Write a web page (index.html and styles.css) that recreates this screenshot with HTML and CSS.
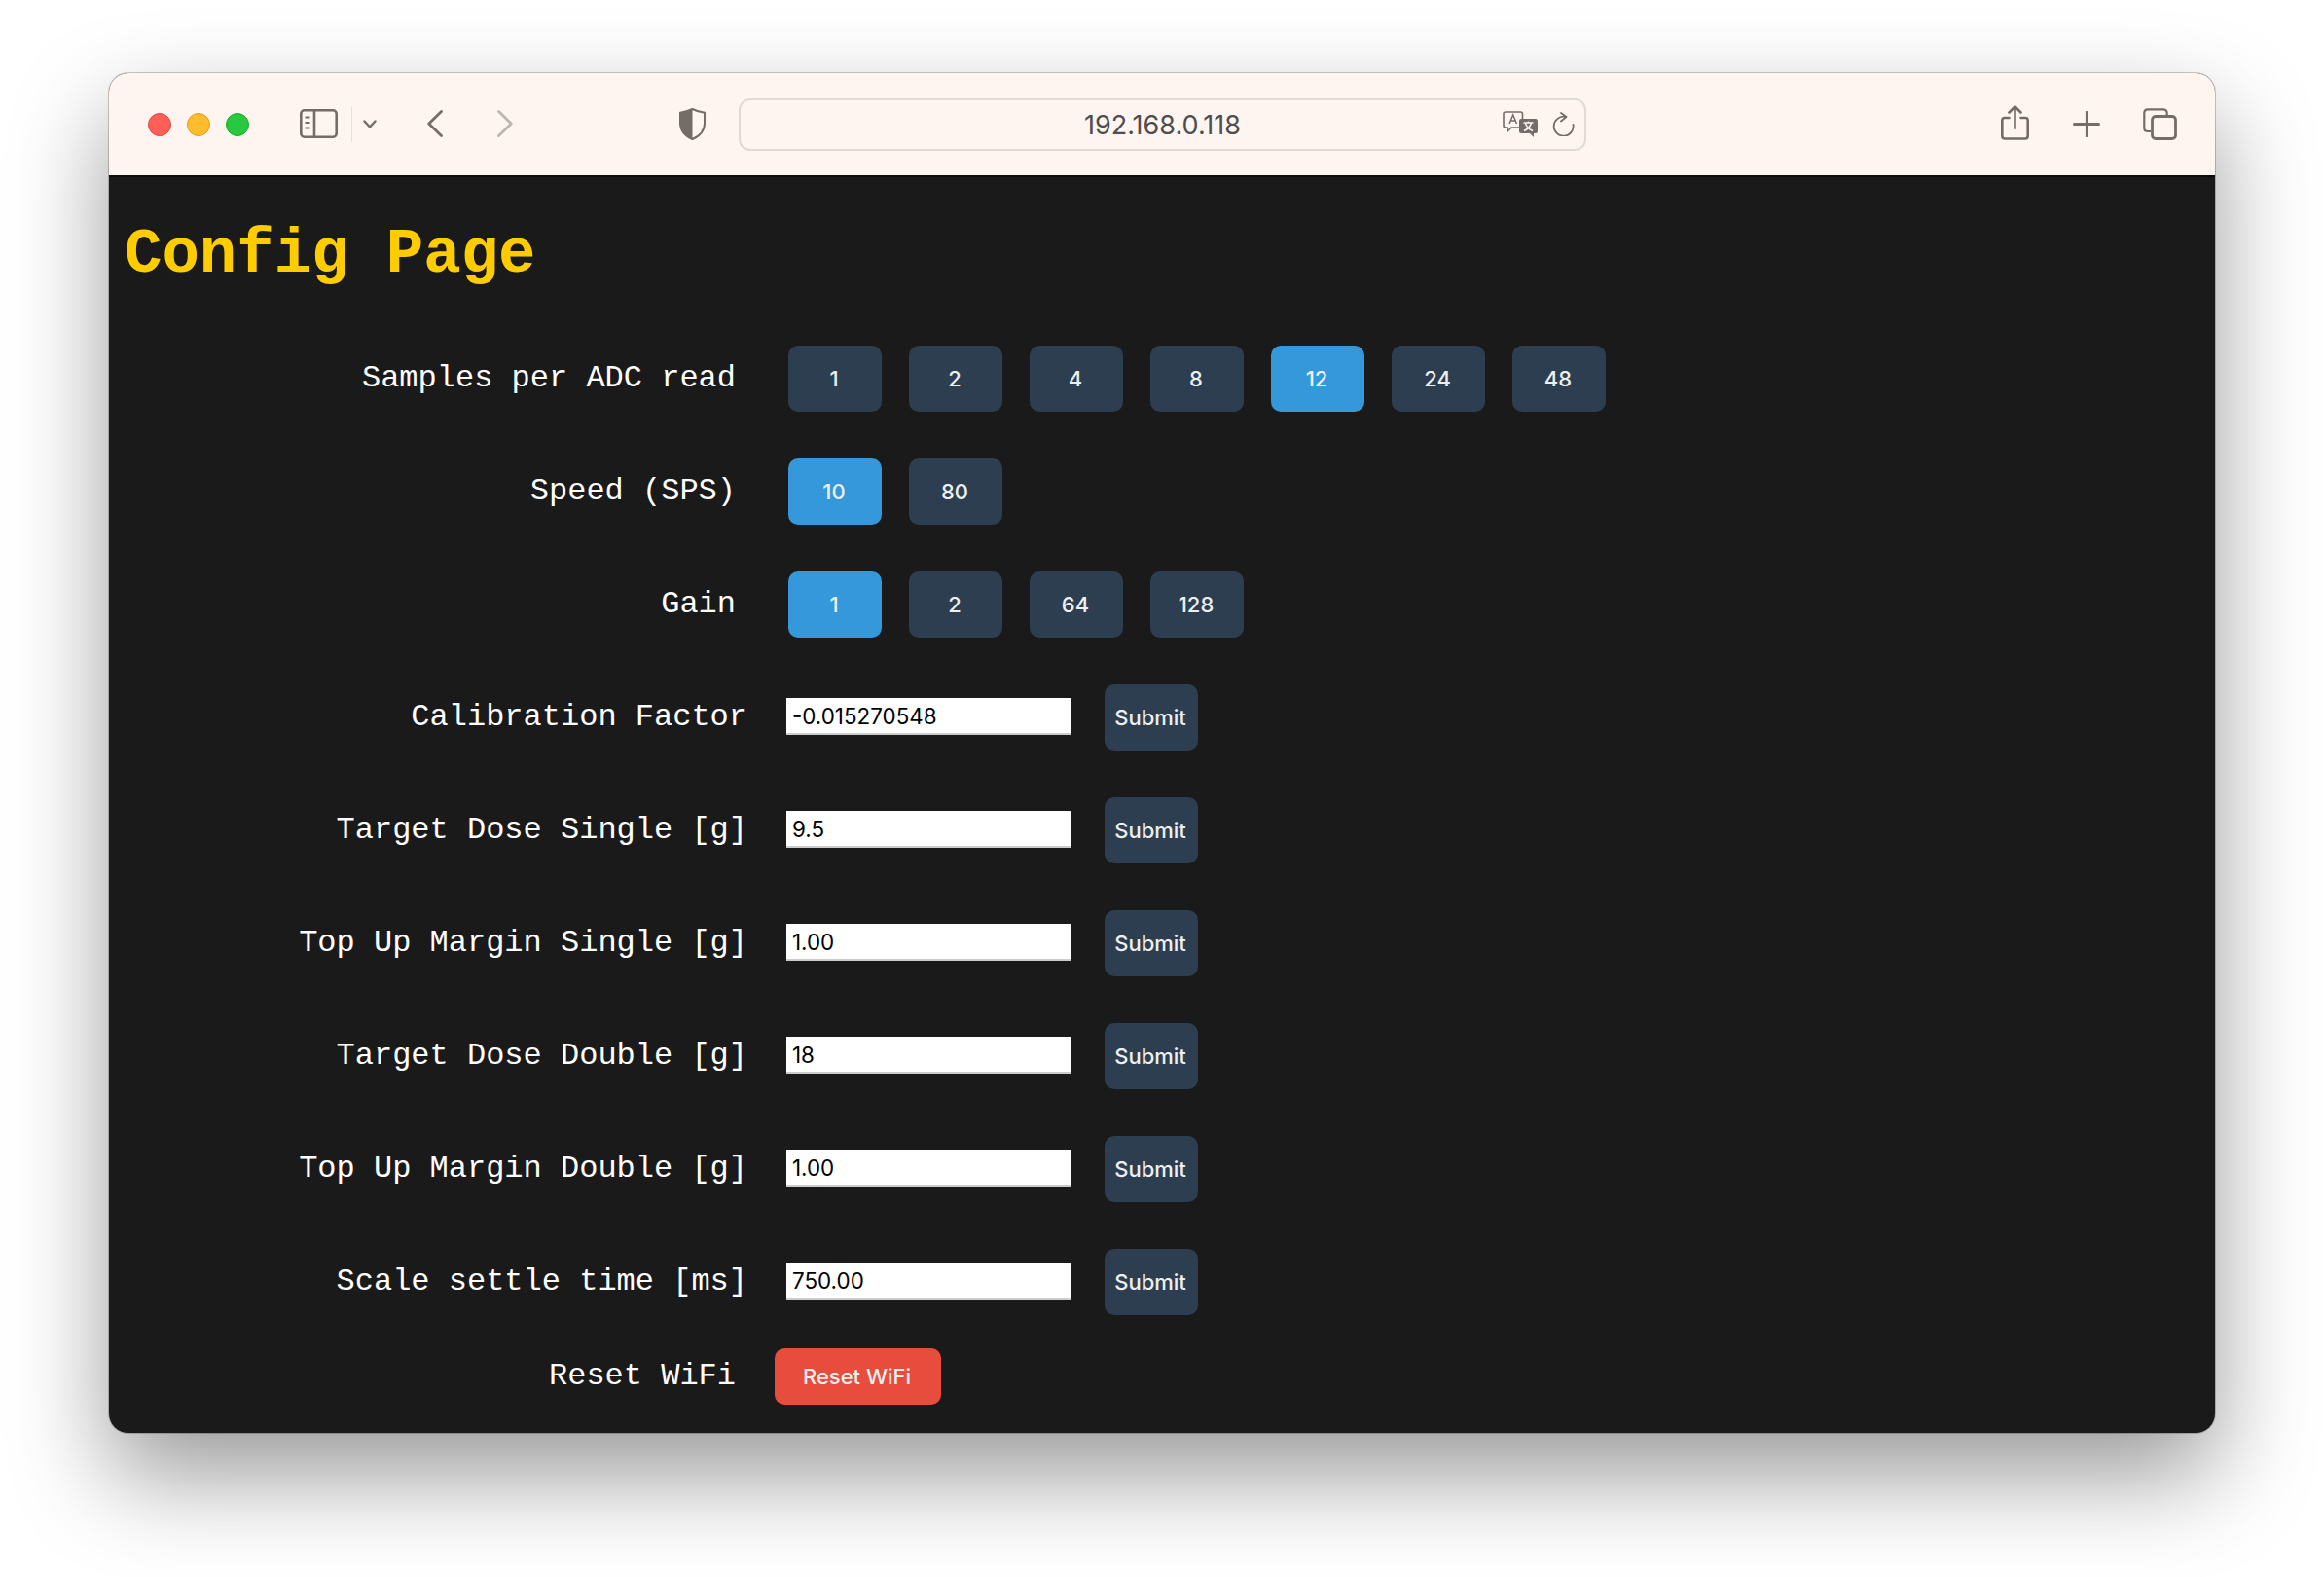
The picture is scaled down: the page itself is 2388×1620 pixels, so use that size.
FILE: index.html
```html
<!DOCTYPE html>
<html lang="en">

<head>
    <meta charset="UTF-8">
    <title>Config Page</title>
    <link rel="stylesheet" href="styles.css">
</head>

<body>
    <div class="window">
        <div class="toolbar">
            <div class="lights">
                <span class="light red"></span>
                <span class="light yellow"></span>
                <span class="light green"></span>
            </div>
            <svg class="ic-sidebar" width="39" height="30" viewBox="0 0 39 30" fill="none" stroke="#756c69" stroke-width="2.6">
                <rect x="1.3" y="1.3" width="36.4" height="27.4" rx="3.5"/>
                <path d="M15 1.5V28.5"/>
                <path d="M5.5 8.5H10.5M5.5 14H10.5M5.5 19.5H10.5" stroke-width="2"/>
            </svg>
            <span class="divider"></span>
            <svg class="ic-chevron" width="14" height="9" viewBox="0 0 14 9" fill="none" stroke="#756c69" stroke-width="2.4" stroke-linecap="round" stroke-linejoin="round">
                <path d="M1.5 1.5L7 7.5L12.5 1.5"/>
            </svg>
            <svg class="ic-back" width="16" height="28" viewBox="0 0 16 28" fill="none" stroke="#756c69" stroke-width="2.8" stroke-linecap="round" stroke-linejoin="round">
                <path d="M14.5 1.5L1.7 14L14.5 26.5"/>
            </svg>
            <svg class="ic-forward" width="16" height="28" viewBox="0 0 16 28" fill="none" stroke="#bcb5b2" stroke-width="2.8" stroke-linecap="round" stroke-linejoin="round">
                <path d="M1.5 1.5L14.3 14L1.5 26.5"/>
            </svg>
            <svg class="ic-shield" width="27" height="33" viewBox="0 0 27 33" fill="none">
                <path d="M13.5 1C9.5 3 5.5 4.2 1 4.8V15.5C1 23 5.5 28.5 13.5 32C21.5 28.5 26 23 26 15.5V4.8C21.5 4.2 17.5 3 13.5 1Z" stroke="#756c69" stroke-width="2"/>
                <path d="M13.5 1C9.5 3 5.5 4.2 1 4.8V15.5C1 23 5.5 28.5 13.5 32Z" fill="#756c69"/>
            </svg>
            <div class="urlbar">
                <span></span>
                <span class="url">192.168.0.118</span>
                <div class="url-icons">
                    <svg width="37" height="27" viewBox="0 0 37 27" fill="none">
                        <path d="M3 1H18.5C19.6 1 20.5 1.9 20.5 3V15C20.5 16.1 19.6 17 18.5 17H9L5 21V17H3C1.9 17 1 16.1 1 15V3C1 1.9 1.9 1 3 1Z" stroke="#756c69" stroke-width="1.6"/>
                        <path d="M7 13L10.7 4L14.5 13M8.4 10H13" stroke="#756c69" stroke-width="1.5"/>
                        <path d="M19 8H34C35.1 8 36 8.9 36 10V21C36 22.1 35.1 23 34 23H32V27L28 23H19C17.9 23 17 22.1 17 21V10C17 8.9 17.9 8 19 8Z" fill="#756c69"/>
                        <path d="M21.5 12H31.5M26.5 10.5V12M29.5 12C28.5 16 25.5 19 22 20.5M23.5 12.5C24.5 16 27.5 19 31 20.5" stroke="#fef5f1" stroke-width="1.5"/>
                    </svg>
                    <svg class="ic-reload" width="23" height="25" viewBox="0 0 23 25" fill="none" stroke="#756c69" stroke-width="1.8" stroke-linecap="round" stroke-linejoin="round">
                        <path d="M13 4.8A10 10 0 1 0 21.5 13"/>
                        <path d="M9 1L14.5 5L9 9.5"/>
                    </svg>
                </div>
            </div>
            <svg class="ic-share" width="29" height="36" viewBox="0 0 29 36" fill="none" stroke="#756c69" stroke-width="2.6" stroke-linecap="round" stroke-linejoin="round">
                <path d="M8.5 13H4C2.5 13 1.3 14.2 1.3 15.7V31.5C1.3 33.3 2.5 34.5 4 34.5H25C26.5 34.5 27.7 33.3 27.7 31.5V15.7C27.7 14.2 26.5 13 25 13H20.5"/>
                <path d="M14.5 24V2M8.5 7.5L14.5 1.5L20.5 7.5"/>
            </svg>
            <svg class="ic-plus" width="28" height="27" viewBox="0 0 28 27" fill="none" stroke="#756c69" stroke-linecap="round">
                <path d="M14 1V26" stroke-width="2.2"/>
                <path d="M1.5 13.5H26.5" stroke-width="3"/>
            </svg>
            <svg class="ic-tabs" width="35" height="33" viewBox="0 0 35 33" fill="none" stroke="#756c69">
                <path d="M8 24H5C2.8 24 1.3 22.5 1.3 20.5V5C1.3 2.8 2.8 1.3 5 1.3H21C23 1.3 24.7 2.8 24.7 5V8" stroke-width="2.2"/>
                <rect x="9.5" y="8.5" width="24" height="23" rx="3.5" stroke-width="2.8"/>
            </svg>
        </div>

        <div class="content">
            <h1 class="title">Config Page</h1>

            <div class="rows">
                <div class="row">
                    <label class="label">Samples per ADC read</label>
                    <div class="btns">
                        <button class="btn">1</button>
                        <button class="btn">2</button>
                        <button class="btn">4</button>
                        <button class="btn">8</button>
                        <button class="btn active">12</button>
                        <button class="btn">24</button>
                        <button class="btn">48</button>
                    </div>
                </div>
                <div class="row">
                    <label class="label">Speed (SPS)</label>
                    <div class="btns">
                        <button class="btn active">10</button>
                        <button class="btn">80</button>
                    </div>
                </div>
                <div class="row">
                    <label class="label">Gain</label>
                    <div class="btns">
                        <button class="btn active">1</button>
                        <button class="btn">2</button>
                        <button class="btn">64</button>
                        <button class="btn">128</button>
                    </div>
                </div>
                <div class="row">
                    <label class="label wide">Calibration Factor</label>
                    <input class="field" type="text" value="-0.015270548">
                    <button class="btn">Submit</button>
                </div>
                <div class="row">
                    <label class="label wide">Target Dose Single [g]</label>
                    <input class="field" type="text" value="9.5">
                    <button class="btn">Submit</button>
                </div>
                <div class="row">
                    <label class="label wide">Top Up Margin Single [g]</label>
                    <input class="field" type="text" value="1.00">
                    <button class="btn">Submit</button>
                </div>
                <div class="row">
                    <label class="label wide">Target Dose Double [g]</label>
                    <input class="field" type="text" value="18">
                    <button class="btn">Submit</button>
                </div>
                <div class="row">
                    <label class="label wide">Top Up Margin Double [g]</label>
                    <input class="field" type="text" value="1.00">
                    <button class="btn">Submit</button>
                </div>
                <div class="row">
                    <label class="label wide">Scale settle time [ms]</label>
                    <input class="field" type="text" value="750.00">
                    <button class="btn">Submit</button>
                </div>
                <div class="row reset-row">
                    <label class="label reset-label">Reset WiFi</label>
                    <button class="btn danger">Reset WiFi</button>
                </div>
            </div>
        </div>
    </div>
</body>

</html>
```

FILE: styles.css
```css
html, body {
    margin: 0;
    background: #ffffff;
}

body {
    padding: 75px 112px 0;
    height: 1620px;
    box-sizing: border-box;
    overflow: hidden;
}

.window {
    width: 2164px;
    height: 1397px;
    border-radius: 20px;
    overflow: hidden;
    background: #1a1a1a;
    box-shadow: 0 0 0 1px rgba(0, 0, 0, 0.2), 0 44px 100px rgba(0, 0, 0, 0.4);
}

.toolbar {
    height: 105px;
    background: #fef5f1;
    border-bottom: 2px solid #0c0c0c;
    display: flex;
    align-items: center;
}

.toolbar svg {
    flex-shrink: 0;
    display: block;
    margin-bottom: 1px;
}

.lights {
    display: flex;
    gap: 16px;
    margin-left: 40px;
}

.light {
    width: 24px;
    height: 24px;
    border-radius: 50%;
    box-sizing: border-box;
}

.red { background: #ff5f57; border: 1px solid #e2463f; }
.yellow { background: #febc2e; border: 1px solid #e1a116; }
.green { background: #28c840; border: 1px solid #14ae2c; }

.ic-sidebar { margin-left: 52px; }

.divider {
    width: 1px;
    height: 36px;
    background: #e6dedb;
    margin-left: 14px;
}

.ic-chevron { margin-left: 11px; }
.ic-back { margin-left: 52px; }
.ic-forward { margin-left: 56px; }
.ic-shield { margin-left: 171px; }

.urlbar {
    width: 871px;
    height: 54px;
    margin-left: 34px;
    box-sizing: border-box;
    border: 2px solid #e0dad6;
    border-radius: 12px;
    display: grid;
    grid-template-columns: 1fr auto 1fr;
    align-items: center;
}

.url {
    font-family: "Inter", "Liberation Sans", sans-serif;
    font-size: 27px;
    line-height: 36px;
    padding-top: 2px;
    color: #4d4d4d;
}

.url-icons {
    display: flex;
    align-items: center;
    justify-content: flex-end;
    gap: 14px;
    padding-right: 10px;
}

.ic-share { margin-left: 426px; }
.toolbar .ic-share { margin-bottom: 4px; }
.ic-plus { margin-left: 45px; }
.ic-tabs { margin-left: 44px; }

.title {
    margin: 0;
    padding: 41px 0 0 16px;
    height: 173px;
    box-sizing: border-box;
    font-family: "Liberation Mono", "Courier New", monospace;
    font-size: 64px;
    line-height: 78px;
    font-weight: bold;
    color: #ffcc00;
}

.rows {
    display: flex;
    flex-direction: column;
    gap: 48px;
}

.row {
    display: flex;
    align-items: center;
    height: 68px;
}

.label {
    width: 644px;
    margin-right: 54px;
    text-align: right;
    font-family: "Liberation Mono", "Courier New", monospace;
    font-size: 32px;
    line-height: 40px;
    color: #ffffff;
}

.label.wide {
    width: 656px;
    margin-right: 40px;
}

.btns {
    display: flex;
    gap: 28px;
}

.btn {
    width: 96px;
    height: 68px;
    padding: 0 2px 0 0;
    border: none;
    border-radius: 10px;
    background: #2c3e50;
    color: #ecf0f1;
    font-family: "Inter", "Liberation Sans", sans-serif;
    font-size: 22px;
    font-weight: 500;
}

.btn.active {
    background: #3498db;
}

.btn.danger {
    width: 171px;
    height: 58px;
    background: #e74c3c;
}

.field {
    width: 293px;
    height: 38px;
    margin: 0 34px 2px 0;
    padding: 0 6px;
    box-sizing: border-box;
    border: none;
    border-bottom: 2px solid #cccccc;
    border-radius: 0;
    background: #ffffff;
    color: #000000;
    font-family: "Inter", "Liberation Sans", sans-serif;
    font-size: 22.4px;
}

.reset-row {
    height: 58px;
    margin-top: -14px;
}

.reset-label {
    margin-right: 40px;
}
```
